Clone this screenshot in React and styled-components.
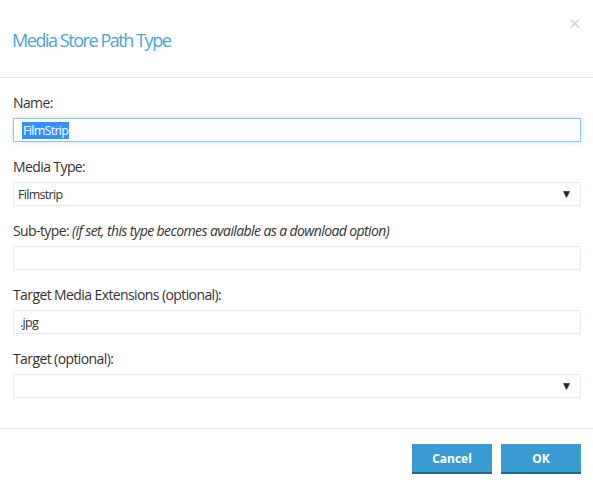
import React from 'react'
import styled, { createGlobalStyle } from 'styled-components'

const GlobalStyle = createGlobalStyle`
    html, body {
        margin: 0;
        padding: 0;
        background: #fff;
        font-family: "Open Sans", "Liberation Sans", sans-serif;
        color: #333;
    }
`

const Dialog = styled.div`
    width: 593px;
    height: 488px;
    background: #fff;
    display: flex;
    flex-direction: column;
`

const Header = styled.div`
    height: 77px;
    border-bottom: 1px solid #e5e5e5;
    display: flex;
    justify-content: space-between;
    padding: 0 12px 0 12px;
    h1 {
        margin: 28px 0 0;
        font-size: 18px;
        font-weight: 400;
        letter-spacing: -1.45px;
        color: #4aa3d8;
        line-height: 24px;
    }
`

const Close = styled.span`
    margin-top: 14px;
    font-size: 15px;
    line-height: 20px;
    color: #cfcfcf;
    font-family: "DejaVu Sans", sans-serif;
`

const Body = styled.div`
    padding: 15px 12px 0 13px;
    height: 335px;
    border-bottom: 1px solid #e5e5e5;
`

const Field = styled.div`
    display: flex;
    flex-direction: column;
    margin-bottom: 15px;
`

const Label = styled.label`
    font-size: 14px;
    line-height: 19px;
    letter-spacing: -0.6px;
    color: #333;
    margin-bottom: 6px;
    em {
        font-style: italic;
    }
`

const Box = styled.div`
    height: 24px;
    box-sizing: border-box;
    border: 1px solid ${p => (p.$focus ? '#8ec6ea' : '#e2ecf5')};
    box-shadow: ${p => (p.$focus ? '0 0 6px rgba(102, 175, 233, 0.35)' : 'none')};
    display: flex;
    align-items: center;
    justify-content: space-between;
    padding: 0 10px 0 ${p => p.$pad || 4}px;
    font-size: 12.5px;
    letter-spacing: -0.7px;
    color: #333;
`

const Selected = styled.span`
    background: #3390ff;
    color: #fff;
    padding: 0 1px;
    line-height: 17px;
`

const Arrow = styled.span`
    font-size: 9px;
    letter-spacing: 0;
    color: #222;
    font-family: "DejaVu Sans", sans-serif;
`

const Footer = styled.div`
    display: flex;
    justify-content: flex-end;
    gap: 9px;
    padding: 15px 12px 0;
`

const Button = styled.button`
    width: 80px;
    height: 30px;
    border: none;
    border-bottom: 2px solid #23678f;
    background: #3a9bd2;
    color: #fff;
    font-family: "Open Sans", sans-serif;
    font-weight: 700;
    font-size: 12px;
    padding: 0;
`

export default function App() {
    return (
        <>
            <GlobalStyle />
            <Dialog>
                <Header>
                    <h1>Media Store Path Type</h1>
                    <Close>✕</Close>
                </Header>
                <Body>
                    <Field>
                        <Label>Name:</Label>
                        <Box $focus $pad={8}><Selected>FilmStrip</Selected></Box>
                    </Field>
                    <Field>
                        <Label>Media Type:</Label>
                        <Box>Filmstrip<Arrow>▼</Arrow></Box>
                    </Field>
                    <Field>
                        <Label>Sub-type: <em>(if set, this type becomes available as a download option)</em></Label>
                        <Box />
                    </Field>
                    <Field>
                        <Label>Target Media Extensions (optional):</Label>
                        <Box $pad={6}>.jpg</Box>
                    </Field>
                    <Field>
                        <Label>Target (optional):</Label>
                        <Box><span /><Arrow>▼</Arrow></Box>
                    </Field>
                </Body>
                <Footer>
                    <Button>Cancel</Button>
                    <Button>OK</Button>
                </Footer>
            </Dialog>
        </>
    )
}
